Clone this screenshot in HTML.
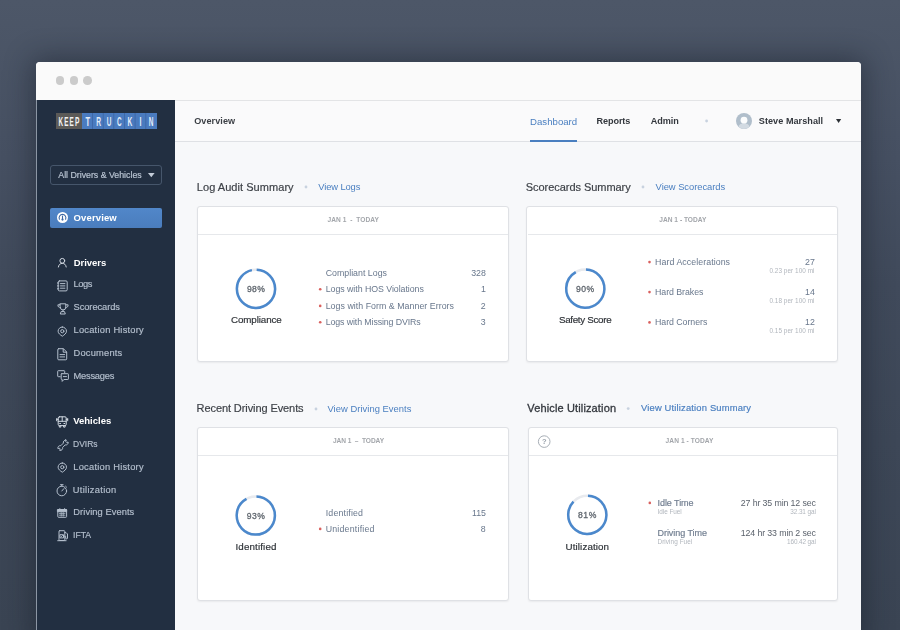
<!DOCTYPE html>
<html>
<head>
<meta charset="utf-8">
<title>Overview</title>
<style>
*{box-sizing:border-box;margin:0;padding:0}
html,body{width:900px;height:630px;overflow:hidden}
body{font-family:"Liberation Sans",sans-serif;position:relative;
 background:linear-gradient(180deg,#4d5768 0%,#465062 25%,#404a5b 45%,#3d4757 70%,#3a4453 100%);}
.t{position:absolute;white-space:pre;line-height:1;filter:blur(.3px)}
.a{position:absolute}
#win{left:36px;top:62px;width:825px;height:580px;background:#f7f8fa;border-radius:4px 4px 0 0;
 box-shadow:0 0 28px 4px rgba(20,26,36,.46);}
#titlebar{left:36px;top:62px;width:825px;height:39px;background:#fafafa;border-bottom:1px solid #e3e4e6;border-radius:4px 4px 0 0}
.dot{position:absolute;top:76.45px;width:8.5px;height:8.5px;border-radius:50%;background:#cbcbcb}
#side{left:36px;top:100px;width:139px;height:540px;background:#222f41;border-left:1px solid #8c96a4}
#head{left:175px;top:101px;width:686px;height:41px;background:#fafafb;border-bottom:1px solid #dfe1e5}
.card{position:absolute;background:#fff;border:1px solid #dfe1e5;border-radius:3px;box-shadow:0 1px 2px rgba(0,0,0,.06)}
.hl{position:absolute;height:1px;background:#e6e8eb}
.rd{position:absolute;width:2.6px;height:2.6px;margin:.2px;border-radius:50%;background:#d9605e}
.sd{position:absolute;width:3px;height:3px;border-radius:50%;background:#c9d3e0}
svg{position:absolute;overflow:visible}
.ic{fill:none;stroke:#b4bfcd;stroke-width:1;stroke-linecap:round;stroke-linejoin:round}
.icw{fill:none;stroke:#d3dae3;stroke-width:1;stroke-linecap:round;stroke-linejoin:round}
</style>
</head>
<body>
<div class="a" id="win"></div>
<div class="a" id="titlebar"></div>
<div class="dot" style="left:55.75px"></div>
<div class="dot" style="left:69.55px"></div>
<div class="dot" style="left:83.35px"></div>
<div class="a" id="side"></div>
<div class="a" id="head"></div>

<!-- logo -->
<div class="a" style="left:56px;top:112.7px;width:25.5px;height:16.4px;background:#5b5a58"></div>
<div class="a" style="left:81.5px;top:112.7px;width:75.5px;height:16.4px;background:#4a7bbf"></div>
<div class="a" id="tiles"></div>

<!-- dropdown -->
<div class="a" style="left:50px;top:164.5px;width:112px;height:20px;border:1px solid #46566b;border-radius:3px"></div>
<svg style="left:147.7px;top:172.6px" width="7" height="5"><path d="M0 0h6.6L3.3 4.3z" fill="#c3ccd8"/></svg>

<!-- overview button -->
<div class="a" style="left:50px;top:208px;width:112px;height:20px;border-radius:2px;background:linear-gradient(180deg,#5187c9,#4a7dbd)"></div>

<!-- header bits -->
<div class="a" style="left:530px;top:140px;width:47px;height:2px;background:#4a7fc0"></div>
<svg style="left:736px;top:113px" width="16" height="16"><circle cx="8" cy="8" r="8" fill="#b0becb"/><path d="M2.4 13.6c1-2.8 3-3.4 5.6-3.4s4.6.6 5.6 3.4a8 8 0 0 1-11.2 0z" fill="#d2dae2"/><circle cx="8" cy="7.2" r="3.4" fill="#fbfcfd"/></svg>
<svg style="left:835.7px;top:119.4px" width="6" height="5"><path d="M0 0h5.2L2.6 4.1z" fill="#2c3036"/></svg>

<!-- section dots -->

<!-- cards -->
<div class="card" style="left:197px;top:206px;width:311.5px;height:155.5px"></div>
<div class="card" style="left:526px;top:206px;width:312px;height:155.5px"></div>
<div class="card" style="left:197px;top:427px;width:311.5px;height:174px"></div>
<div class="card" style="left:527.5px;top:427px;width:310.5px;height:174px"></div>
<div class="hl" style="left:198px;top:234px;width:309.5px"></div>
<div class="hl" style="left:527.5px;top:234px;width:309.5px"></div>
<div class="hl" style="left:198px;top:454.5px;width:309.5px"></div>
<div class="hl" style="left:528.5px;top:454.5px;width:308.5px"></div>

<!-- rings -->
<svg style="left:0;top:0" width="900" height="630">
 <g fill="none" stroke-width="2.5">
  <circle cx="256" cy="288.8" r="19.1" stroke="#e8eaee"/>
  <circle cx="256" cy="288.8" r="19.1" stroke="#4b88cc" stroke-dasharray="114.37 120.01" transform="rotate(-88 256 288.8)"/>
  <circle cx="585.3" cy="288.6" r="19.1" stroke="#e8eaee"/>
  <circle cx="585.3" cy="288.6" r="19.1" stroke="#4b88cc" stroke-dasharray="108.61 120.01" transform="rotate(-88 585.3 288.6)"/>
  <circle cx="255.8" cy="515.5" r="19.1" stroke="#e8eaee"/>
  <circle cx="255.8" cy="515.5" r="19.1" stroke="#4b88cc" stroke-dasharray="108.85 120.01" transform="rotate(-88 255.8 515.5)"/>
  <circle cx="587.3" cy="514.8" r="19.1" stroke="#e8eaee"/>
  <circle cx="587.3" cy="514.8" r="19.1" stroke="#4b88cc" stroke-dasharray="103.21 120.01" transform="rotate(-88 587.3 514.8)"/>
 </g>
 <circle cx="544.2" cy="441.6" r="5.8" fill="none" stroke="#a7aeb6" stroke-width="1"/>
</svg>

<!-- bullets -->
<svg style="left:0;top:0" width="900" height="630">
 <g fill="#d9605e">
  <circle cx="320.2" cy="289.2" r="1.3"/><circle cx="320.2" cy="305.9" r="1.3"/><circle cx="320.2" cy="322.2" r="1.3"/>
  <circle cx="649.5" cy="262.1" r="1.3"/><circle cx="649.5" cy="292.1" r="1.3"/><circle cx="649.5" cy="322.4" r="1.3"/>
  <circle cx="320.2" cy="528.9" r="1.3"/><circle cx="649.8" cy="502.9" r="1.3"/>
 </g>
 <g fill="#c8d2df">
  <circle cx="706.6" cy="121" r="1.4"/>
  <circle cx="306" cy="187" r="1.4"/><circle cx="643" cy="187" r="1.4"/><circle cx="316" cy="409" r="1.4"/><circle cx="628.2" cy="408.6" r="1.4"/>
 </g>
</svg>

<!-- logo letters -->
<svg style="left:0;top:0" width="900" height="140" font-family="Liberation Sans, sans-serif" font-weight="700" font-size="12.4px">
 <g fill="rgba(10,25,70,.22)">
  <rect x="92.1" y="113" width=".8" height="16"/><rect x="102.8" y="113" width=".8" height="16"/><rect x="113.4" y="113" width=".8" height="16"/>
  <rect x="124" y="113" width=".8" height="16"/><rect x="134.7" y="113" width=".8" height="16"/><rect x="145.4" y="113" width=".8" height="16"/>
 </g>
 <g fill="#f3f3f3">
  <text x="58.6" y="125.6" textLength="4.6" lengthAdjust="spacingAndGlyphs">K</text>
  <text x="64.3" y="125.6" textLength="4.2" lengthAdjust="spacingAndGlyphs">E</text>
  <text x="69.6" y="125.6" textLength="4.2" lengthAdjust="spacingAndGlyphs">E</text>
  <text x="74.9" y="125.6" textLength="4.4" lengthAdjust="spacingAndGlyphs">P</text>
 </g>
 <g fill="#e4edf9">
  <text x="85.5" y="125.6" textLength="4.6" lengthAdjust="spacingAndGlyphs">T</text>
  <text x="96.3" y="125.6" textLength="4.8" lengthAdjust="spacingAndGlyphs">R</text>
  <text x="106.7" y="125.6" textLength="4.6" lengthAdjust="spacingAndGlyphs">U</text>
  <text x="117.1" y="125.6" textLength="4.6" lengthAdjust="spacingAndGlyphs">C</text>
  <text x="127.5" y="125.6" textLength="4.8" lengthAdjust="spacingAndGlyphs">K</text>
  <text x="139.5" y="125.6" textLength="2" lengthAdjust="spacingAndGlyphs">I</text>
  <text x="148.7" y="125.6" textLength="4.7" lengthAdjust="spacingAndGlyphs">N</text>
 </g>
</svg>

<!-- overview gauge -->
<svg style="left:56.7px;top:211.9px" width="11" height="11"><circle cx="5.5" cy="5.5" r="5.5" fill="#fff"/>
 <path d="M2.4 7.2a3.4 3.4 0 1 1 6.2 0" fill="none" stroke="#3f6aa6" stroke-width="1.1" stroke-linecap="round"/>
 <path d="M5.5 4v3.4" stroke="#3f6aa6" stroke-width="1.1" stroke-linecap="round"/><circle cx="5.5" cy="7.6" r="1.1" fill="#3f6aa6"/></svg>

<!-- drivers (person) -->
<svg style="left:57px;top:257px" width="11" height="11" class="icw"><circle cx="5.3" cy="3.8" r="2.4"/><path d="M1.4 10c.3-2.3 1.7-3.6 3.9-3.6s3.6 1.3 3.9 3.6"/></svg>

<!-- logs (notebook) -->
<svg style="left:57px;top:279.5px" width="11" height="12" class="ic"><rect x="1.2" y=".9" width="9" height="10" rx="1.2"/><path d="M3.5 3.6h4.4M3.5 5.9h4.4M3.5 8.2h4.4"/><path d="M.4 3h1.4M.4 5.9h1.4M.4 8.8h1.4"/></svg>

<!-- scorecards (trophy) -->
<svg style="left:56.8px;top:302.8px" width="12" height="12" class="ic"><path d="M3.2.8h5.6v3.4a2.8 2.8 0 0 1-5.6 0z"/><path d="M3.2 1.8H.9c0 2 .9 2.9 2.5 3M8.8 1.8h2.3c0 2-.9 2.9-2.5 3"/><path d="M6 7v1.6M4.5 8.6h3l.8 2.4H3.7z"/></svg>

<!-- location pin 1 -->
<svg style="left:57px;top:325.8px" width="11" height="12" class="ic"><path d="M5.3 1a4.2 4.2 0 0 1 4.2 4.2c0 2.2-2.3 3.8-4.2 5C3.4 9 1.1 7.4 1.1 5.2A4.2 4.2 0 0 1 5.3 1z"/><circle cx="5.3" cy="5.2" r="1.6"/></svg>

<!-- documents -->
<svg style="left:57px;top:347.8px" width="11" height="13" class="ic"><path d="M1.7.7h4.7l3.3 3.3v6.9a.9.9 0 0 1-.9.9H1.7a.9.9 0 0 1-.9-.9V1.6a.9.9 0 0 1 .9-.9z"/><path d="M6.2.9v3.3h3.3"/><path d="M3 6.6h4.6M3 8.9h4.6"/></svg>

<!-- messages -->
<svg style="left:56.5px;top:370.2px" width="13" height="13" class="ic"><path d="M3.2 6.7H1.3a.6.6 0 0 1-.6-.6V1.3a.6.6 0 0 1 .6-.6h5.8a.6.6 0 0 1 .6.6v1.5"/><path d="M4.8 3.7h6a.6.6 0 0 1 .6.6v4.6a.6.6 0 0 1-.6.6H6.9l-1.7 1.9V9.5h-.4a.6.6 0 0 1-.6-.6V4.3a.6.6 0 0 1 .6-.6z"/><path d="M6.3 6.6h3.2"/></svg>

<!-- vehicles (bus) -->
<svg style="left:56.3px;top:416.2px" width="13" height="12" class="icw"><rect x="2.2" y=".8" width="8" height="8.8" rx="1.2"/><path d="M2.2 5.3h8M6.2.9v4.3"/><path d="M.7 2.6v2.2M11.7 2.6v2.2M.7 3.3h1.5M10.2 3.3h1.5"/><path d="M3.3 9.7v1.4h1.5V9.7M7.6 9.7v1.4h1.5V9.7"/><path d="M3.7 7.5h.8M7.9 7.5h.8"/></svg>

<!-- DVIRs (wrench) -->
<svg style="left:56.8px;top:439.5px" width="12" height="11" class="ic"><path d="M8.7.8a2.4 2.4 0 0 0-2.3 3.1L3.8 6.5A2.4 2.4 0 0 0 .9 9.4l1.4-.5.9.9-.5 1.4a2.4 2.4 0 0 0 2.9-2.9l2.6-2.6a2.4 2.4 0 0 0 2.9-2.9l-1.4.5-.9-.9.5-1.4a2.4 2.4 0 0 0-.6-.2z" transform="translate(0 -.8)"/></svg>

<!-- location pin 2 -->
<svg style="left:56.5px;top:461.8px" width="11" height="12" class="ic"><path d="M5.3 1a4.2 4.2 0 0 1 4.2 4.2c0 2.2-2.3 3.8-4.2 5C3.4 9 1.1 7.4 1.1 5.2A4.2 4.2 0 0 1 5.3 1z"/><circle cx="5.3" cy="5.2" r="1.6"/></svg>

<!-- utilization (stopwatch) -->
<svg style="left:56.2px;top:484px" width="13" height="13" class="ic"><circle cx="5.8" cy="7" r="4.8"/><path d="M4.5.7h2.6M5.8.8v1.4M9.6 2.2l1 1M5.8 7l2.1-2.4"/></svg>

<!-- driving events (calendar) -->
<svg style="left:57px;top:508.3px" width="12" height="11" class="ic"><rect x=".8" y="1.5" width="8.8" height="7.8" rx=".8"/><rect x=".8" y="1.5" width="8.8" height="2.2" fill="#b4bfcd"/><path d="M2.8.6v1.4M7.6.6v1.4"/><path d="M2.4 5.4h5.6M2.4 7.2h5.6M4.2 4.6v3.6M6.2 4.6v3.6" stroke-width=".8"/></svg>

<!-- IFTA (fuel pump) -->
<svg style="left:56.8px;top:530px" width="12" height="12" class="ic"><rect x="2" y=".7" width="5.8" height="9.8" rx=".7"/><rect x="3.3" y="4.7" width="3.2" height="3.2"/><path d="M.7 10.7h8.4"/><path d="M7.8 2.6h1.3l1.4 1.4v4a.9.9 0 0 1-1.8 0V6.3H7.8"/><path d="M4 7l1.6-1.6" stroke-width=".8"/></svg>

<div class="t" style="left:194.2px;top:117.0px;font-size:9.1px;color:#3b3f45;letter-spacing:0.08px;font-weight:700">Overview</div>
<div class="t" style="left:530.0px;top:116.7px;font-size:9.6px;color:#4a7fc0;letter-spacing:0.03px">Dashboard</div>
<div class="t" style="left:596.4px;top:117.0px;font-size:9.1px;color:#33373d;letter-spacing:-0.06px;font-weight:700">Reports</div>
<div class="t" style="left:650.8px;top:117.0px;font-size:9.1px;color:#33373d;letter-spacing:-0.07px;font-weight:700">Admin</div>
<div class="t" style="left:758.8px;top:117.0px;font-size:9.1px;color:#33373d;letter-spacing:0.05px;font-weight:700">Steve Marshall</div>
<div class="t" style="left:58.3px;top:170.6px;font-size:8.8px;color:#b9c4d2;letter-spacing:-0.01px;-webkit-text-stroke:.18px">All Drivers &amp; Vehicles</div>
<div class="t" style="left:73.5px;top:212.7px;font-size:9.5px;color:#ffffff;letter-spacing:0.14px;font-weight:700">Overview</div>
<div class="t" style="left:73.7px;top:258.0px;font-size:9.5px;color:#ffffff;letter-spacing:-0.03px;font-weight:700">Drivers</div>
<div class="t" style="left:73.5px;top:280.1px;font-size:9.3px;color:#b4bfcd;letter-spacing:-0.39px;-webkit-text-stroke:.18px">Logs</div>
<div class="t" style="left:73.5px;top:303.1px;font-size:9.3px;color:#b4bfcd;letter-spacing:-0.06px;-webkit-text-stroke:.18px">Scorecards</div>
<div class="t" style="left:73.5px;top:326.1px;font-size:9.3px;color:#b4bfcd;letter-spacing:0.24px;-webkit-text-stroke:.18px">Location History</div>
<div class="t" style="left:73.5px;top:349.3px;font-size:9.3px;color:#b4bfcd;letter-spacing:0.21px;-webkit-text-stroke:.18px">Documents</div>
<div class="t" style="left:73.5px;top:371.5px;font-size:9.3px;color:#b4bfcd;letter-spacing:-0.21px;-webkit-text-stroke:.18px">Messages</div>
<div class="t" style="left:73.2px;top:416.3px;font-size:9.5px;color:#ffffff;font-weight:700">Vehicles</div>
<div class="t" style="left:73.3px;top:439.7px;font-size:9.3px;color:#b4bfcd;transform:scaleX(0.915);transform-origin:0 50%;-webkit-text-stroke:.18px">DVIRs</div>
<div class="t" style="left:73.3px;top:462.8px;font-size:9.3px;color:#b4bfcd;letter-spacing:0.24px;-webkit-text-stroke:.18px">Location History</div>
<div class="t" style="left:72.8px;top:485.5px;font-size:9.3px;color:#b4bfcd;letter-spacing:0.31px;-webkit-text-stroke:.18px">Utilization</div>
<div class="t" style="left:73.3px;top:508.3px;font-size:9.3px;color:#b4bfcd;letter-spacing:0.08px;-webkit-text-stroke:.18px">Driving Events</div>
<div class="t" style="left:73.3px;top:530.9px;font-size:9.3px;color:#b4bfcd;transform:scaleX(0.930);transform-origin:0 50%;-webkit-text-stroke:.18px">IFTA</div>
<div class="t" style="left:196.8px;top:181.5px;font-size:11px;color:#3d4147;letter-spacing:0.05px;-webkit-text-stroke:.18px">Log Audit Summary</div>
<div class="t" style="left:318.2px;top:182.4px;font-size:9.4px;color:#4a7fc0;letter-spacing:-0.11px">View Logs</div>
<div class="t" style="left:525.8px;top:181.6px;font-size:11px;color:#3d4147;letter-spacing:-0.05px;-webkit-text-stroke:.18px">Scorecards Summary</div>
<div class="t" style="left:655.6px;top:182.4px;font-size:9.4px;color:#4a7fc0;letter-spacing:-0.04px">View Scorecards</div>
<div class="t" style="left:196.6px;top:403.2px;font-size:11px;color:#3d4147;letter-spacing:-0.09px;-webkit-text-stroke:.18px">Recent Driving Events</div>
<div class="t" style="left:327.5px;top:404.1px;font-size:9.4px;color:#4a7fc0;letter-spacing:0.04px">View Driving Events</div>
<div class="t" style="left:527.3px;top:402.8px;font-size:11px;color:#33373d;letter-spacing:0.14px;-webkit-text-stroke:.3px">Vehicle Utilization</div>
<div class="t" style="left:641.0px;top:403.2px;font-size:9.4px;color:#4a7fc0;letter-spacing:0.17px;-webkit-text-stroke:.18px">View Utilization Summary</div>
<div class="t" style="left:327.5px;top:216.5px;font-size:6.6px;color:#a3a6ab;letter-spacing:0.06px;font-weight:700">JAN 1  -  TODAY</div>
<div class="t" style="left:246.9px;top:284.9px;font-size:8.6px;color:#60676f;letter-spacing:0.45px;-webkit-text-stroke:.3px">98%</div>
<div class="t" style="left:231.0px;top:315.1px;font-size:9.8px;color:#2f3338;letter-spacing:-0.11px;-webkit-text-stroke:.18px">Compliance</div>
<div class="t" style="left:325.7px;top:268.9px;font-size:8.8px;color:#68778c;letter-spacing:0.01px">Compliant Logs</div>
<div class="t" style="left:325.7px;top:284.9px;font-size:8.8px;color:#68778c;letter-spacing:-0.04px">Logs with HOS Violations</div>
<div class="t" style="left:325.7px;top:301.6px;font-size:8.8px;color:#68778c;letter-spacing:0.04px">Logs with Form &amp; Manner Errors</div>
<div class="t" style="left:325.7px;top:317.9px;font-size:8.8px;color:#68778c;letter-spacing:-0.10px">Logs with Missing DVIRs</div>
<div class="t" style="left:471.2px;top:268.9px;font-size:8.8px;color:#68778c">328</div>
<div class="t" style="left:480.9px;top:284.9px;font-size:8.8px;color:#68778c">1</div>
<div class="t" style="left:480.8px;top:301.6px;font-size:8.8px;color:#68778c">2</div>
<div class="t" style="left:480.8px;top:317.9px;font-size:8.8px;color:#68778c">3</div>
<div class="t" style="left:659.3px;top:216.5px;font-size:6.6px;color:#a3a6ab;letter-spacing:0.01px;font-weight:700">JAN 1 - TODAY</div>
<div class="t" style="left:576.0px;top:284.9px;font-size:8.6px;color:#60676f;letter-spacing:0.50px;-webkit-text-stroke:.3px">90%</div>
<div class="t" style="left:558.9px;top:314.8px;font-size:9.8px;color:#2f3338;letter-spacing:-0.30px;-webkit-text-stroke:.18px">Safety Score</div>
<div class="t" style="left:655.0px;top:257.8px;font-size:8.8px;color:#68778c;letter-spacing:0.07px">Hard Accelerations</div>
<div class="t" style="left:655.0px;top:287.8px;font-size:8.8px;color:#68778c;letter-spacing:-0.05px">Hard Brakes</div>
<div class="t" style="left:655.0px;top:318.1px;font-size:8.8px;color:#68778c;letter-spacing:-0.04px">Hard Corners</div>
<div class="t" style="left:805.0px;top:257.8px;font-size:8.8px;color:#68778c">27</div>
<div class="t" style="left:805.0px;top:287.8px;font-size:8.8px;color:#68778c">14</div>
<div class="t" style="left:805.0px;top:318.1px;font-size:8.8px;color:#68778c">12</div>
<div class="t" style="left:769.4px;top:267.6px;font-size:6.4px;color:#b1b6bd;letter-spacing:0.05px">0.23 per 100 mi</div>
<div class="t" style="left:769.4px;top:297.8px;font-size:6.4px;color:#b1b6bd;letter-spacing:0.05px">0.18 per 100 mi</div>
<div class="t" style="left:769.4px;top:328.2px;font-size:6.4px;color:#b1b6bd;letter-spacing:0.05px">0.15 per 100 mi</div>
<div class="t" style="left:333.0px;top:437.7px;font-size:6.6px;color:#a3a6ab;letter-spacing:-0.07px;font-weight:700">JAN 1  –  TODAY</div>
<div class="t" style="left:246.7px;top:511.9px;font-size:8.6px;color:#60676f;letter-spacing:0.45px;-webkit-text-stroke:.3px">93%</div>
<div class="t" style="left:235.5px;top:541.9px;font-size:9.8px;color:#2f3338;letter-spacing:0.13px;-webkit-text-stroke:.18px">Identified</div>
<div class="t" style="left:325.7px;top:508.5px;font-size:8.8px;color:#68778c;letter-spacing:0.18px">Identified</div>
<div class="t" style="left:325.7px;top:524.6px;font-size:8.8px;color:#68778c;letter-spacing:0.21px">Unidentified</div>
<div class="t" style="left:471.9px;top:508.5px;font-size:8.8px;color:#68778c">115</div>
<div class="t" style="left:480.8px;top:524.6px;font-size:8.8px;color:#68778c">8</div>
<div class="t" style="left:665.6px;top:437.7px;font-size:6.6px;color:#a3a6ab;letter-spacing:0.07px;font-weight:700">JAN 1 - TODAY</div>
<div class="t" style="left:541.9px;top:438.0px;font-size:7.5px;color:#9aa2ab;font-weight:700">?</div>
<div class="t" style="left:578.1px;top:511.2px;font-size:8.6px;color:#60676f;letter-spacing:0.50px;-webkit-text-stroke:.3px">81%</div>
<div class="t" style="left:565.5px;top:541.9px;font-size:9.8px;color:#2f3338;letter-spacing:0.11px;-webkit-text-stroke:.18px">Utilization</div>
<div class="t" style="left:657.5px;top:498.5px;font-size:9.0px;color:#717e90;letter-spacing:-0.06px;-webkit-text-stroke:.18px">Idle Time</div>
<div class="t" style="left:657.5px;top:528.9px;font-size:9.0px;color:#717e90;letter-spacing:-0.05px;-webkit-text-stroke:.18px">Driving Time</div>
<div class="t" style="left:657.5px;top:509.2px;font-size:6.4px;color:#b1b6bd;letter-spacing:-0.04px">Idle Fuel</div>
<div class="t" style="left:657.5px;top:539.2px;font-size:6.4px;color:#b1b6bd;letter-spacing:0.06px">Driving Fuel</div>
<div class="t" style="left:740.8px;top:498.6px;font-size:8.8px;color:#5b626c;letter-spacing:-0.12px">27 hr 35 min 12 sec</div>
<div class="t" style="left:740.8px;top:529.0px;font-size:8.8px;color:#5b626c;letter-spacing:-0.12px">124 hr 33 min 2 sec</div>
<div class="t" style="left:790.3px;top:509.2px;font-size:6.4px;color:#b1b6bd;letter-spacing:-0.09px">32.31 gal</div>
<div class="t" style="left:787.0px;top:539.2px;font-size:6.4px;color:#b1b6bd;letter-spacing:-0.11px">160.42 gal</div>
</body>
</html>
